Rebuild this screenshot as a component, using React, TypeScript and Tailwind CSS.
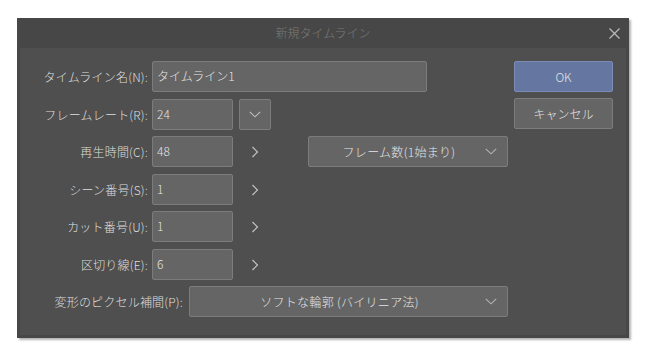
import React from "react";

const font = { fontFamily: '"Noto Sans CJK JP", "Noto Sans", sans-serif' };

function ChevronRight() {
  return (
    <svg width="8" height="12" viewBox="0 0 8 12" fill="none">
      <polyline points="1.5,1 6.5,6 1.5,11" stroke="#c4c4c4" strokeWidth="1.2" />
    </svg>
  );
}

function ChevronDown({ color = "#b4b4b4" }: { color?: string }) {
  return (
    <svg width="12" height="7" viewBox="0 0 12 7" fill="none">
      <polyline points="0.8,0.8 6,5.8 11.2,0.8" stroke={color} strokeWidth="1.1" />
    </svg>
  );
}

function Field({ w, value }: { w: string; value: string }) {
  return (
    <div
      className={`${w} h-[31px] bg-[#656565] border border-[#7c7c7c] rounded-[2px] flex items-center pl-[4px] pb-[2px] text-[12px] text-[#e4e4e4]`}
    >
      {value}
    </div>
  );
}

function Select({ w, text }: { w: string; text: string }) {
  return (
    <div
      className={`${w} h-[31px] bg-[#656565] border border-[#7c7c7c] rounded-[2px] flex items-center text-[12px] text-[#e4e4e4]`}
    >
      <div className="flex-1 text-center pl-[4px] tracking-[0.3px]">{text}</div>
      <div className="w-[22px] flex items-center justify-start">
        <ChevronDown />
      </div>
    </div>
  );
}

function Label({ text }: { text: string }) {
  return (
    <div className="w-[128px] text-right text-[12px] text-[#dedede] whitespace-nowrap tracking-[0.2px]">
      {text}
    </div>
  );
}

function Arrow() {
  return (
    <div className="w-[32px] ml-[6px] flex items-center justify-center">
      <ChevronRight />
    </div>
  );
}

export default function App() {
  return (
    <div className="w-[663px] h-[360px] bg-white pt-[18px] pl-[17px] font-light" style={font}>
      <div className="w-[612px] h-[320px] bg-[#474747] flex flex-col shadow-[2px_2px_2px_rgba(0,0,0,0.3)]">
        {/* title bar */}
        <div className="h-[30px] flex items-center relative">
          <div className="flex-1 text-center text-[12px] text-[#7a7a7a]">新規タイムライン</div>
          <div className="absolute right-[9px] top-[10px]">
            <svg width="11" height="11" viewBox="0 0 11 11" fill="none">
              <line x1="0.5" y1="0.5" x2="10.5" y2="10.5" stroke="#b8b8b8" strokeWidth="1.3" />
              <line x1="10.5" y1="0.5" x2="0.5" y2="10.5" stroke="#b8b8b8" strokeWidth="1.3" />
            </svg>
          </div>
        </div>
        {/* body */}
        <div className="mx-[3px] mb-[3px] flex-1 bg-[#4f4f4f] flex">
          <div className="flex-1 flex flex-col pt-[13px]">
            <div className="flex items-center">
              <Label text="タイムライン名(N):" />
              <div className="ml-[4px]">
                <Field w="w-[275px]" value="タイムライン1" />
              </div>
            </div>
            <div className="flex items-center mt-[7px]">
              <Label text="フレームレート(R):" />
              <div className="ml-[4px]">
                <Field w="w-[81px]" value="24" />
              </div>
              <div className="ml-[6px] w-[32px] h-[31px] bg-[#656565] border border-[#7c7c7c] rounded-[2px] flex items-center justify-center">
                <ChevronDown color="#c0c0c0" />
              </div>
            </div>
            <div className="flex items-center mt-[6px]">
              <Label text="再生時間(C):" />
              <div className="ml-[4px]">
                <Field w="w-[81px]" value="48" />
              </div>
              <Arrow />
              <div className="ml-[37px]">
                <Select w="w-[200px]" text="フレーム数(1始まり)" />
              </div>
            </div>
            <div className="flex items-center mt-[7px]">
              <Label text="シーン番号(S):" />
              <div className="ml-[4px]">
                <Field w="w-[81px]" value="1" />
              </div>
              <Arrow />
            </div>
            <div className="flex items-center mt-[6px]">
              <Label text="カット番号(U):" />
              <div className="ml-[4px]">
                <Field w="w-[81px]" value="1" />
              </div>
              <Arrow />
            </div>
            <div className="flex items-center mt-[7px]">
              <Label text="区切り線(E):" />
              <div className="ml-[4px]">
                <Field w="w-[81px]" value="6" />
              </div>
              <Arrow />
            </div>
            <div className="flex items-center mt-[6px]">
              <div className="w-[163px] text-right text-[12px] text-[#dedede] whitespace-nowrap tracking-[0.2px]">
                変形のピクセル補間(P):
              </div>
              <div className="ml-[6px]">
                <Select w="w-[319px]" text="ソフトな輪郭 (バイリニア法)" />
              </div>
            </div>
          </div>
          <div className="w-[99px] mr-[13px] pt-[13px] flex flex-col gap-[6px]">
            <div className="h-[31px] bg-[#6577a1] border border-[#7b8db6] rounded-[2px] flex items-center justify-center text-[12px] text-[#e4e4e4]">
              OK
            </div>
            <div className="h-[31px] bg-[#656565] border border-[#7c7c7c] rounded-[2px] flex items-center justify-center text-[12px] text-[#e4e4e4]">
              キャンセル
            </div>
          </div>
        </div>
      </div>
    </div>
  );
}
